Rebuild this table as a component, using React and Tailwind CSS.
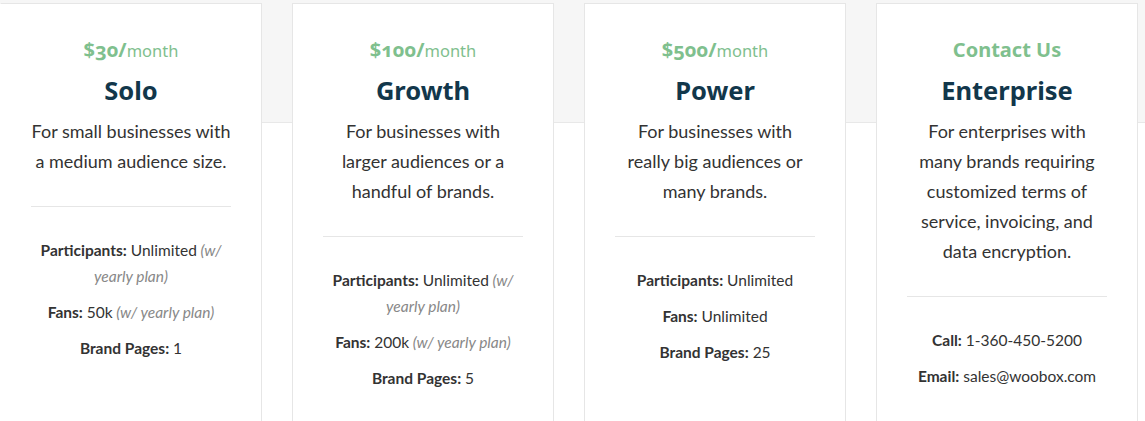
const plans = [
  {
    price: '$30/',
    unit: 'month',
    name: 'Solo',
    blurb: 'For small businesses with a medium audience size.',
    features: [
      { label: 'Participants:', value: 'Unlimited', note: '(w/ yearly plan)' },
      { label: 'Fans:', value: '50k', note: '(w/ yearly plan)' },
      { label: 'Brand Pages:', value: '1' },
    ],
  },
  {
    price: '$100/',
    unit: 'month',
    name: 'Growth',
    blurb: 'For businesses with larger audiences or a handful of brands.',
    features: [
      { label: 'Participants:', value: 'Unlimited', note: '(w/ yearly plan)' },
      { label: 'Fans:', value: '200k', note: '(w/ yearly plan)' },
      { label: 'Brand Pages:', value: '5' },
    ],
  },
  {
    price: '$500/',
    unit: 'month',
    name: 'Power',
    blurb: 'For businesses with really big audiences or many brands.',
    features: [
      { label: 'Participants:', value: 'Unlimited' },
      { label: 'Fans:', value: 'Unlimited' },
      { label: 'Brand Pages:', value: '25' },
    ],
  },
  {
    price: 'Contact Us',
    name: 'Enterprise',
    blurb: 'For enterprises with many brands requiring customized terms of service, invoicing, and data encryption.',
    features: [
      { label: 'Call:', value: '1-360-450-5200' },
      { label: 'Email:', value: 'sales@woobox.com' },
    ],
  },
]

const PlanCard = ({ plan, first }) => (
  <div
    className={`w-[262px] shrink-0 h-[440px] bg-white border border-[#e6e6e6] px-[30px] pt-[32px] text-center ${
      first ? 'border-l-white' : ''
    }`}
  >
    {/* Price */}
    <div className="h-[28px] leading-[28px] font-['Noto_Sans',sans-serif] text-[#7fc08e] oldstyle-nums">
      <span className="text-[20px] font-bold">{plan.price}</span>
      {plan.unit && <span className="text-[16.5px]">{plan.unit}</span>}
    </div>

    {/* Name */}
    <h2 className="mt-[8px] h-[36px] leading-[36px] font-['Noto_Sans',sans-serif] text-[25.5px] font-bold text-[#12374b]">
      {plan.name}
    </h2>

    <p className="mt-[8px] font-['Lato',sans-serif] text-[18px] leading-[30px] text-[#333]">
      {plan.blurb}
    </p>

    <hr className="mt-[30px] border-0 border-t border-[#e6e6e6]" />

    <div className="mt-[30px] flex flex-col gap-[10px] font-['Lato',sans-serif] text-[15.5px] leading-[26px] text-[#333]">
      {plan.features.map((f, i) => (
        <p key={i}>
          <span className="font-bold">{f.label}</span> {f.value}
          {f.note && <em className="text-[#888]"> {f.note}</em>}
        </p>
      ))}
    </div>
  </div>
)

export default function App() {
  return (
    <div className="w-[1145px] h-[421px] overflow-hidden bg-[linear-gradient(to_bottom,#f6f6f6_0,#f6f6f6_122px,#e8e8e8_122px,#e8e8e8_123px,#ffffff_123px)]">
      <div className="flex gap-[30px] pt-[3px]">
        {plans.map((plan, i) => (
          <PlanCard key={plan.name} plan={plan} first={i === 0} />
        ))}
      </div>
    </div>
  )
}
